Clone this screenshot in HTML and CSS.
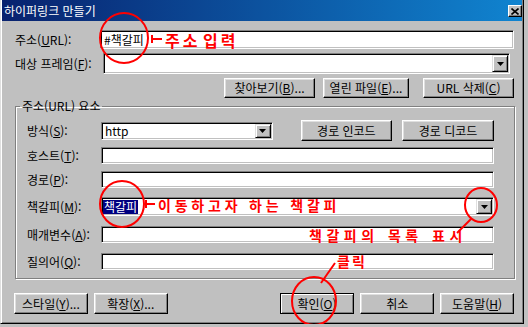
FILE: index.html
```html
<!DOCTYPE html>
<html lang="ko">
<head>
  <meta charset="UTF-8">
  <title>하이퍼링크 만들기</title>
  <link rel="stylesheet" href="styles.css">
</head>
<body>

  <div class="dialog">
    <div class="titlebar">
      <span class="title">하이퍼링크 만들기</span>
      <button class="close">
        <svg width="8" height="7" viewBox="0 0 8 7"><path d="M0.5 0.5l7 6M7.5 0.5l-7 6" stroke="#000" stroke-width="1.6"/></svg>
      </button>
    </div>

    <div class="main">
      <div class="row row-url">
        <span class="lbl">주소(<u>U</u>RL):</span>
        <div class="field url-field">#책갈피</div>
      </div>

      <div class="row row-frame">
        <span class="lbl">대상 프레임(<u>F</u>):</span>
        <div class="field combo frame-combo">
          <span class="combo-text"></span>
          <span class="combo-btn"><svg width="7" height="4" viewBox="0 0 7 4"><polygon points="0,0 7,0 3.5,4" fill="#000"/></svg></span>
        </div>
      </div>

      <div class="row btn-row">
        <button class="btn btn-browse">찾아보기(<u>B</u>)...</button>
        <button class="btn btn-open">열린 파일(<u>E</u>)...</button>
        <button class="btn btn-clear">URL 삭제(<u>C</u>)</button>
      </div>

      <fieldset class="group">
        <legend>주소(URL) 요소</legend>
        <div class="group-body">
          <div class="grow r-method">
            <span class="lbl">방식(<u>S</u>):</span>
            <div class="field combo method-combo">
              <span class="combo-text">http</span>
              <span class="combo-btn"><svg width="7" height="4" viewBox="0 0 7 4"><polygon points="0,0 7,0 3.5,4" fill="#000"/></svg></span>
            </div>
            <button class="btn btn-encode">경로 인코드</button>
            <button class="btn btn-decode">경로 디코드</button>
          </div>
          <div class="grow r-host">
            <span class="lbl">호스트(<u>T</u>):</span>
            <div class="field wide"></div>
          </div>
          <div class="grow r-path">
            <span class="lbl">경로(<u>P</u>):</span>
            <div class="field wide"></div>
          </div>
          <div class="grow r-mark">
            <span class="lbl">책갈피(<u>M</u>):</span>
            <div class="field combo wide mark-combo">
              <span class="combo-text"><span class="sel">책갈피</span></span>
              <span class="combo-btn"><svg width="7" height="4" viewBox="0 0 7 4"><polygon points="0,0 7,0 3.5,4" fill="#000"/></svg></span>
            </div>
          </div>
          <div class="grow r-param">
            <span class="lbl">매개변수(<u>A</u>):</span>
            <div class="field wide"></div>
          </div>
          <div class="grow r-query">
            <span class="lbl">질의어(<u>Q</u>):</span>
            <div class="field wide"></div>
          </div>
        </div>
      </fieldset>

      <div class="footer">
        <button class="btn fbtn">스타일(<u>Y</u>)...</button>
        <button class="btn fbtn btn-ext">확장(<u>X</u>)...</button>
        <button class="btn fbtn btn-ok">확인(<u>O</u>)</button>
        <button class="btn fbtn btn-cancel">취소</button>
        <button class="btn fbtn btn-help">도움말(<u>H</u>)</button>
      </div>
    </div>

    <!-- red hand-drawn notes -->
    <svg class="marks" width="528" height="327" viewBox="0 0 528 327">
      <g fill="none" stroke="#f00" stroke-width="2">
        <ellipse cx="124" cy="38" rx="24" ry="25"/>
        <path d="M152 35v8M152 39h10"/>
        <ellipse cx="122" cy="204" rx="22" ry="23"/>
        <path d="M146 200v8M146 204h9"/>
        <ellipse cx="481" cy="205" rx="16" ry="17"/>
        <path d="M457 233L471 219"/>
        <ellipse cx="314" cy="301" rx="22" ry="24"/>
        <path d="M335 263L321 283"/>
      </g>
    </svg>
    <span class="note note-url">주소 입력</span>
    <span class="note note-mark">이동하고자 하는 책갈피</span>
    <span class="note note-list">책갈피의 목록 표시</span>
    <span class="note note-click">클릭</span>
  </div>

</body>
</html>
```

FILE: styles.css
```css
body {
  margin: 0;
  background-color: #c0c0c0;
  font-family: "Noto Sans CJK KR", "Noto Sans", sans-serif;
  font-size: 12px;
  color: #000;
}

u {
  text-decoration-thickness: 1px;
  text-underline-offset: 1px;
}

.dialog {
  position: relative;
  width: 524px;
  height: 324px;
  box-sizing: border-box;
  border-left: 1px solid #dfdfdf;
  border-right: 1px solid #000;
  border-bottom: 1px solid #000;
  box-shadow: inset 1px 0 #fff, inset -1px -1px #808080;
  padding: 0 1px 1px 1px;
}

.titlebar {
  display: flex;
  align-items: center;
  height: 21px;
  padding-left: 2px;
  background: linear-gradient(to right, #08216e, #1084d0);
}

.title {
  flex: 1;
  color: #fff;
  font-size: 12px;
  line-height: 14px;
}

.close {
  display: flex;
  align-items: center;
  justify-content: center;
  width: 14px;
  height: 12px;
  margin-top: 1px;
  padding: 0;
  box-sizing: border-box;
  background-color: #c0c0c0;
  border: 1px solid;
  border-color: #fff #000 #000 #fff;
  box-shadow: inset -1px -1px #808080;
}

.main {
  padding: 9px 8px 0 13px;
}

.row {
  display: flex;
  align-items: center;
}

.lbl {
  white-space: nowrap;
  line-height: 14px;
}

.row .lbl {
  width: 85px;
  flex: none;
}

.field {
  box-sizing: border-box;
  background-color: #fff;
  border: 1px solid;
  border-color: #808080 #fff #fff #808080;
  box-shadow: inset 1px 1px #000, inset -1px -1px #c0c0c0;
  line-height: 14px;
  white-space: nowrap;
}

.row-url {
  height: 19px;
}

.url-field {
  flex: 1;
  height: 19px;
  padding: 2px 0 0 3px;
}

.row-frame {
  height: 21px;
  margin-top: 4px;
}

.row-frame .lbl {
  width: 88px;
}

.combo {
  display: flex;
  padding: 1px;
}

.combo-text {
  flex: 1;
  padding-left: 2px;
  display: flex;
  align-items: center;
}

.combo-btn {
  display: flex;
  align-items: center;
  justify-content: center;
  width: 16px;
  box-sizing: border-box;
  background-color: #c0c0c0;
  border: 1px solid;
  border-color: #dfdfdf #000 #000 #dfdfdf;
  box-shadow: inset 1px 1px #fff, inset -1px -1px #808080;
}

.frame-combo {
  flex: 1;
  height: 21px;
  margin-right: 4px;
}

.btn {
  box-sizing: border-box;
  background-color: #c0c0c0;
  border: 1px solid;
  border-color: #fff #000 #000 #fff;
  box-shadow: inset -1px -1px #808080, inset 1px 1px #dfdfdf;
  font: inherit;
  color: #000;
  padding: 0;
  line-height: 14px;
  white-space: nowrap;
}

.btn-row {
  justify-content: flex-end;
  height: 20px;
  margin-top: 4px;
}

.btn-row .btn {
  height: 20px;
}

.btn-browse {
  width: 91px;
  margin-right: 8px;
}

.btn-open {
  width: 86px;
  margin-right: 14px;
}

.btn-clear {
  width: 91px;
}

.group {
  width: 500px;
  box-sizing: border-box;
  margin: 1px 0 0 0;
  padding: 0;
  min-width: 0;
  border: 1px solid #808080;
  box-shadow: 1px 1px #fff, inset 1px 1px #fff;
}

.group legend {
  margin-left: 4px;
  padding: 0 2px;
  line-height: 14px;
  font-size: 12px;
}

.group-body {
  padding: 7px 20px 8px 11px;
}

.grow {
  display: flex;
  align-items: center;
}

.grow .lbl {
  width: 74px;
  flex: none;
}

.wide {
  flex: 1;
}

.r-method {
  height: 21px;
}

.method-combo {
  width: 172px;
  height: 18px;
}

.method-combo .combo-text {
  padding-left: 2px;
}

.btn-encode {
  width: 92px;
  height: 21px;
  margin-left: 28px;
}

.btn-decode {
  width: 92px;
  height: 21px;
  margin-left: 10px;
}

.r-host {
  height: 17px;
  margin-top: 6px;
}

.r-host .field,
.r-path .field,
.r-param .field,
.r-query .field {
  height: 17px;
}

.r-path {
  height: 17px;
  margin-top: 7px;
}

.r-mark {
  height: 19px;
  margin-top: 9px;
}

.mark-combo {
  height: 19px;
}

.mark-combo .combo-text {
  padding-left: 0;
}

.sel {
  background-color: #000080;
  color: #fff;
  padding: 0 1px;
}

.r-param {
  height: 17px;
  margin-top: 10px;
}

.r-query {
  height: 17px;
  margin-top: 10px;
}

.footer {
  display: flex;
  height: 21px;
  margin-top: 14px;
  margin-left: -1px;
}

.fbtn {
  width: 74px;
  height: 21px;
}

.btn-ext {
  margin-left: 6px;
}

.btn-ok {
  width: 75px;
  margin-left: 112px;
  border-color: #000;
  box-shadow: inset 1px 1px #fff, inset -1px -1px #808080;
}

.btn-cancel,
.btn-help {
  margin-left: 6px;
}

.marks {
  position: absolute;
  top: 0;
  left: -1px;
  pointer-events: none;
}

.note {
  position: absolute;
  color: #f00;
  font-weight: bold;
  font-size: 14px;
  line-height: 14px;
  white-space: nowrap;
}

.note-url {
  left: 164px;
  top: 32px;
  font-size: 16px;
  line-height: 16px;
  letter-spacing: 3px;
  word-spacing: -5px;
}

.note-mark {
  left: 157px;
  top: 198px;
  letter-spacing: 3.8px;
}

.note-list {
  left: 308px;
  top: 228px;
  letter-spacing: 4.5px;
  word-spacing: 1px;
}

.note-click {
  left: 336px;
  top: 254px;
  letter-spacing: 2px;
}
```
